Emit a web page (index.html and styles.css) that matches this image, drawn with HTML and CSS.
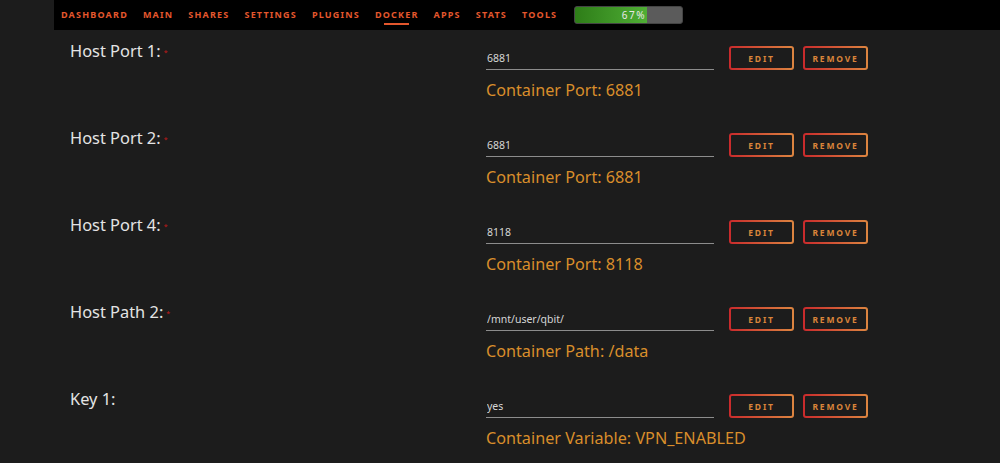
FILE: index.html
```html
<!DOCTYPE html>
<html lang="en">
<head>
    <meta charset="UTF-8">
    <meta name="viewport" content="width=device-width, initial-scale=1.0">
    <title>Docker - Edit Container</title>
    <link rel="stylesheet" href="styles.css">
</head>
<body>
    <div class="nav">
        <a class="nav-item">DASHBOARD</a>
        <a class="nav-item">MAIN</a>
        <a class="nav-item">SHARES</a>
        <a class="nav-item">SETTINGS</a>
        <a class="nav-item">PLUGINS</a>
        <a class="nav-item active">DOCKER</a>
        <a class="nav-item">APPS</a>
        <a class="nav-item">STATS</a>
        <a class="nav-item">TOOLS</a>
        <!-- array usage -->
        <div class="usage">
            <div class="usage-bar" style="width: 67%;"><span>67%</span></div>
        </div>
    </div>

    <div class="config">
        <div class="row">
            <div class="label required">Host Port 1:</div>
            <div class="field">
                <div class="controls">
                    <input class="value" type="text" value="6881">
                    <button class="btn">EDIT</button>
                    <button class="btn">REMOVE</button>
                </div>
                <div class="desc">Container Port: 6881</div>
            </div>
        </div>
        <div class="row">
            <div class="label required">Host Port 2:</div>
            <div class="field">
                <div class="controls">
                    <input class="value" type="text" value="6881">
                    <button class="btn">EDIT</button>
                    <button class="btn">REMOVE</button>
                </div>
                <div class="desc">Container Port: 6881</div>
            </div>
        </div>
        <div class="row">
            <div class="label required">Host Port 4:</div>
            <div class="field">
                <div class="controls">
                    <input class="value" type="text" value="8118">
                    <button class="btn">EDIT</button>
                    <button class="btn">REMOVE</button>
                </div>
                <div class="desc">Container Port: 8118</div>
            </div>
        </div>
        <div class="row">
            <div class="label required">Host Path 2:</div>
            <div class="field">
                <div class="controls">
                    <input class="value" type="text" value="/mnt/user/qbit/">
                    <button class="btn">EDIT</button>
                    <button class="btn">REMOVE</button>
                </div>
                <div class="desc">Container Path: /data</div>
            </div>
        </div>
        <div class="row">
            <div class="label">Key 1:</div>
            <div class="field">
                <div class="controls">
                    <input class="value" type="text" value="yes">
                    <button class="btn">EDIT</button>
                    <button class="btn">REMOVE</button>
                </div>
                <div class="desc">Container Variable: VPN_ENABLED</div>
            </div>
        </div>
    </div>
</body>
</html>
```

FILE: styles.css
```css
body {
    font-family: "Noto Sans", "Open Sans", sans-serif;
    background-color: #1c1c1c;
    margin: 0;
    padding: 0;
}

/* Top menu */
.nav {
    margin-left: 54px;
    height: 30px;
    background-color: #000;
    display: flex;
    align-items: center;
    padding-left: 7px;
    gap: 15px;
}

.nav-item {
    position: relative;
    color: #e4572d;
    font-size: 9px;
    font-weight: bold;
    letter-spacing: 1.2px;
    line-height: 30px;
    cursor: pointer;
}

.nav-item.active::after {
    content: "";
    position: absolute;
    left: 9px;
    right: 10px;
    bottom: 5px;
    height: 2px;
    background-color: #e4572d;
}

.usage {
    margin-left: 2px;
    width: 107px;
    height: 16px;
    background-color: #5b5b5b;
    border: 1px solid #444;
    border-radius: 3px;
    overflow: hidden;
}

.usage-bar {
    height: 100%;
    background: linear-gradient(90deg, #2e7d18, #4fae35);
    text-align: right;
    box-sizing: border-box;
    padding-right: 1px;
    color: #e8e8e8;
    font-size: 10px;
    letter-spacing: 1.5px;
    line-height: 16px;
}

/* Settings rows */
.config {
    padding: 16px 0 0 70px;
}

.row {
    display: grid;
    grid-template-columns: 416px auto;
    margin-bottom: 33px;
}

.label {
    color: #e4e4e4;
    font-size: 16.4px;
    line-height: 20px;
    margin-top: -5px;
}

.label.required::after {
    content: "*";
    color: #c41a1a;
    font-size: 7px;
    vertical-align: middle;
    margin-left: 3px;
}

.controls {
    display: flex;
    align-items: center;
    height: 24px;
}

.value {
    width: 228px;
    height: 24px;
    box-sizing: border-box;
    padding: 0 1px;
    margin: 0 15px 0 0;
    background: transparent;
    border: none;
    border-bottom: 1px solid #8c8c8c;
    color: #d6d6d6;
    font-family: inherit;
    font-size: 10.5px;
    outline: none;
}

.btn {
    width: 65px;
    height: 24px;
    margin-right: 9px;
    padding: 0;
    border: 2px solid transparent;
    border-radius: 3px;
    background: linear-gradient(#1c1c1c, #1c1c1c) padding-box,
                linear-gradient(90deg, #c92a2c, #dc8540) border-box;
    color: #d9843a;
    font-family: inherit;
    font-size: 8.5px;
    font-weight: bold;
    letter-spacing: 1.8px;
    cursor: pointer;
}

.desc {
    margin-top: 10px;
    color: #d98e2b;
    font-size: 16.2px;
    line-height: 20px;
}
```
